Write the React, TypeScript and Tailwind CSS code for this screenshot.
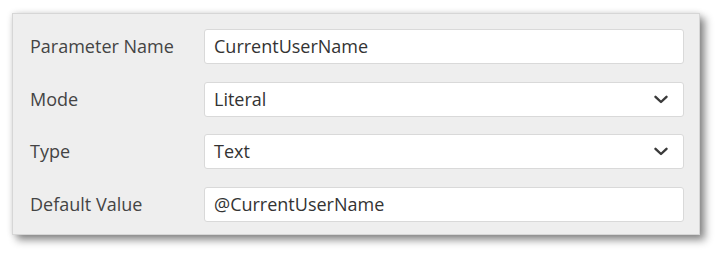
import React from 'react';

const Chevron: React.FC = () => (
  <svg width="14" height="9" viewBox="0 0 14 9" fill="none" className="shrink-0">
    <path d="M1.5 1.8 L7 7 L12.5 1.8" stroke="#3a3a3a" strokeWidth="2.4" strokeLinecap="round" strokeLinejoin="round" />
  </svg>
);

const rows: { label: string; value: string; select?: boolean }[] = [
  { label: 'Parameter Name', value: 'CurrentUserName' },
  { label: 'Mode', value: 'Literal', select: true },
  { label: 'Type', value: 'Text', select: true },
  { label: 'Default Value', value: '@CurrentUserName' },
];

const App: React.FC = () => {
  return (
    <div className="w-[724px] h-[256px] bg-white pt-[13px] pl-[12px] font-['Segoe_UI','Open_Sans',sans-serif]">
      <div className="w-[688px] h-[222px] bg-[#eeeeee] border border-[#d6d6d6] shadow-[5px_5px_8px_rgba(0,0,0,0.45),0_0_6px_rgba(0,0,0,0.12)] pt-[15px] pl-[17px] pr-[15px]">
        <div className="grid grid-cols-[174px_1fr] gap-y-[17.5px]">
          {rows.map((r) => (
            <React.Fragment key={r.label}>
              <div className="flex items-center text-[18px] text-[#444444]">{r.label}</div>
              <div className="h-[35px] bg-white border border-[#d9d9d9] rounded-[3px] flex items-center justify-between pl-[9px] pr-[15px] text-[18px] text-[#333333]">
                <span>{r.value}</span>
                {r.select && <Chevron />}
              </div>
            </React.Fragment>
          ))}
        </div>
      </div>
    </div>
  );
};

export default App;
